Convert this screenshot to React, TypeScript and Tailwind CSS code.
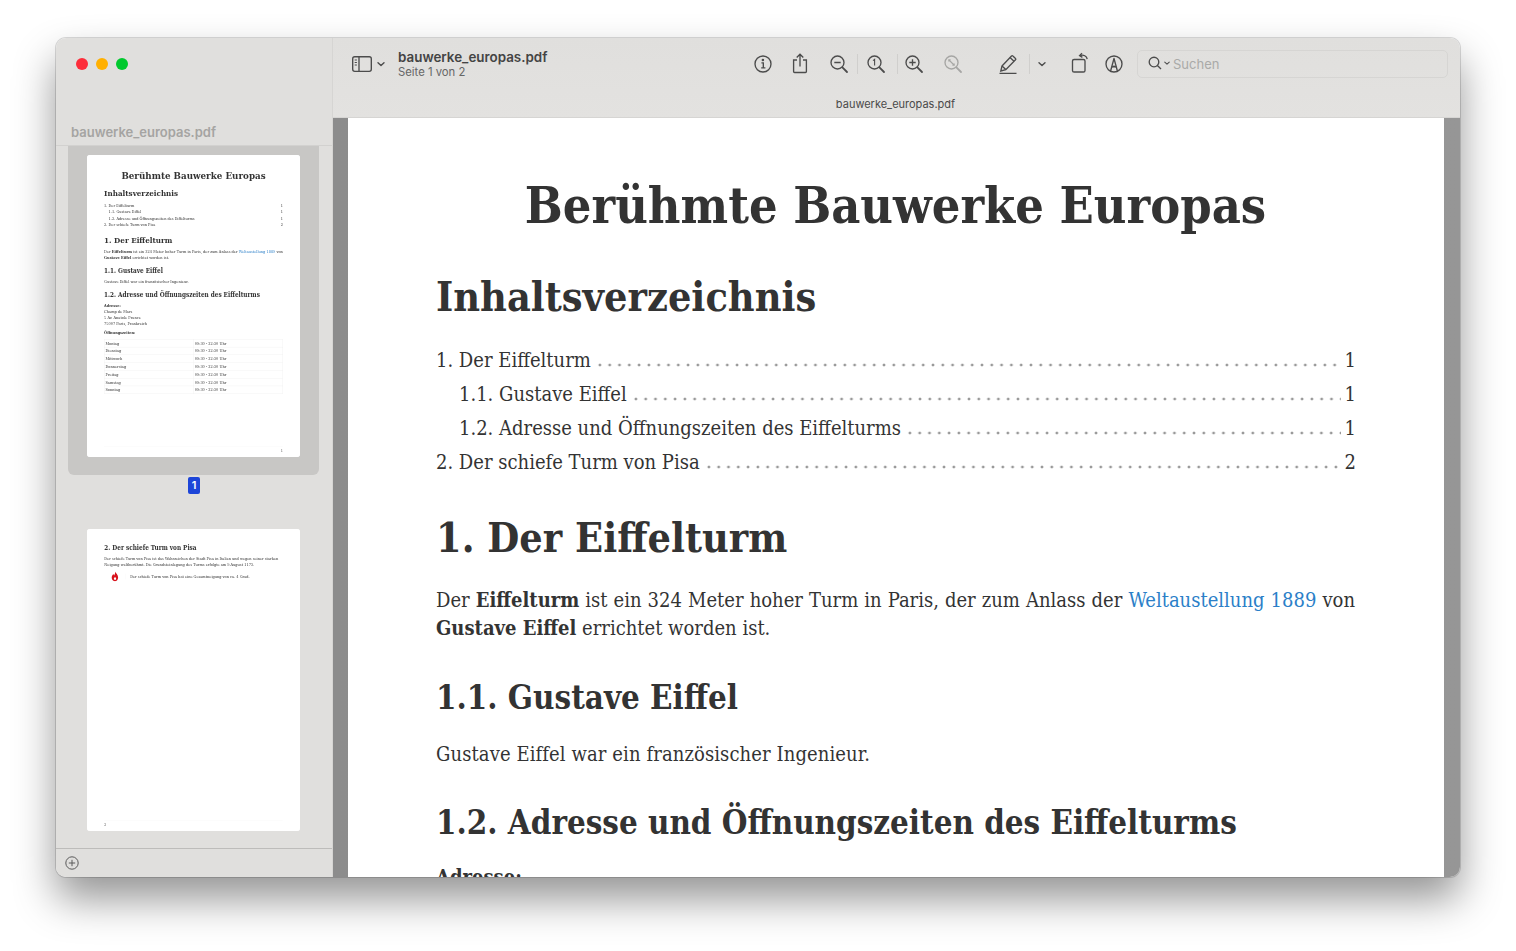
const serif = "font-['DejaVu_Serif_Condensed','DejaVu_Serif',serif]";

const days = ['Montag', 'Dienstag', 'Mittwoch', 'Donnerstag', 'Freitag', 'Samstag', 'Sonntag'];

const toc = [
  { label: '1. Der Eiffelturm', page: 1, indent: false },
  { label: '1.1. Gustave Eiffel', page: 1, indent: true },
  { label: '1.2. Adresse und Öffnungszeiten des Eiffelturms', page: 1, indent: true },
  { label: '2. Der schiefe Turm von Pisa', page: 2, indent: false },
];

const H2 = ({ children, className }: { children: React.ReactNode; className: string }) => (
  <h2 className={`text-[41px] leading-[56px] font-bold ${className}`}>{children}</h2>
);

const H3 = ({ children, className }: { children: React.ReactNode; className: string }) => (
  <h3 className={`text-[32.8px] leading-[44px] font-bold ${className}`}>{children}</h3>
);

const PageOne = () => (
  <div className={`flex h-[1554px] w-[1096px] flex-col bg-white pt-[74px] pr-[89px] pl-[88px] text-[20px] leading-[28px] text-[#333333] ${serif}`}>
    <h1 className="text-center text-[50px] leading-[60px] font-bold">Berühmte Bauwerke Europas</h1>
    <H2 className="mt-[33px]">Inhaltsverzeichnis</H2>
    <div className="mt-[18px]">
      {toc.map((row) => (
        <div key={row.label} className={`flex h-[34px] items-center ${row.indent ? 'pl-[23px]' : ''}`}>
          <span>{row.label}</span>
          <span className="mx-[4px] mt-[10px] h-[6px] flex-1 bg-[radial-gradient(circle,#999999_1.2px,transparent_1.7px)] bg-[length:9.8px_6px] bg-repeat-x" />
          <span className="-mr-[1px]">{row.page}</span>
        </div>
      ))}
    </div>
    <H2 className="mt-[31px]">1. Der Eiffelturm</H2>
    <p className="mt-[20px] text-justify">
      Der <b>Eiffelturm</b> ist ein 324 Meter hoher Turm in Paris, der zum Anlass der{' '}
      <span className="text-[#2b7fc8]">Weltaustellung 1889</span> von <b>Gustave Eiffel</b> errichtet worden ist.
    </p>
    <H3 className="mt-[34px]">1.1. Gustave Eiffel</H3>
    <p className="mt-[20px] tracking-[0.1px]">Gustave Eiffel war ein französischer Ingenieur.</p>
    <H3 className="mt-[33px]">1.2. Adresse und Öffnungszeiten des Eiffelturms</H3>
    <div className="mt-[17px] leading-[30px]">
      <b>Adresse:</b>
      <div>Champ de Mars</div>
      <div>5 Av. Anatole France</div>
      <div>75007 Paris, Frankreich</div>
    </div>
    <div className="mt-[17px] leading-[30px] font-bold">Öffnungszeiten:</div>
    <div className="mt-[20px] border-t border-l border-[#dddddd]">
      {days.map((day) => (
        <div key={day} className="grid h-[40px] grid-cols-2 items-center border-b border-[#dddddd]">
          <span className="flex h-full items-center border-r border-[#dddddd] pl-[6px]">{day}</span>
          <span className="flex h-full items-center border-r border-[#dddddd] pl-[6px]">09:30 - 22:30 Uhr</span>
        </div>
      ))}
    </div>
    <div className="mt-auto mb-[22px] border-t border-[#eeeeee] pt-[10px] text-right text-[16px] leading-[24px]">1</div>
  </div>
);

const PageTwo = () => (
  <div className={`flex h-[1554px] w-[1096px] flex-col bg-white px-[89px] pt-[76px] text-[20px] leading-[30px] text-[#333333] ${serif}`}>
    <H3 className="">2. Der schiefe Turm von Pisa</H3>
    <p className="mt-[16px]">
      Der schiefe Turm von Pisa ist das Wahrzeichen der Stadt Pisa in Italien und wegen seiner starken Neigung
      weltberühmt. Die Grundsteinlegung des Turms erfolgte am 9.August 1173.
    </p>
    <div className="mt-[22px] flex items-center">
      <span className="flex w-[110px] justify-center">
        <svg width="42" height="52" viewBox="0 0 42 52">
          <path d="M22 1c2 9 15 15 15 30 0 11-8 19-16 19S4 43 4 32c0-8 5-12 8-18 2 3 3 6 5 7 3-5 5-12 5-20z" fill="#d8121c" />
          <path d="M21 27c2 4 6 6 6 11 0 4-3 6-6 6s-6-3-6-6c0-5 5-6 6-11z" fill="#ffffff" />
        </svg>
      </span>
      <span className="border-l border-[#eeeeee] pl-[22px]">Der schiefe Turm von Pisa hat eine Gesamtneigung von ca. 4 Grad.</span>
    </div>
    <div className="mt-auto mb-[22px] border-t border-[#eeeeee] pt-[10px] text-[16px] leading-[24px]">2</div>
  </div>
);

const Thumb = ({ children }: { children: React.ReactNode }) => (
  <div className="h-[302px] w-[213px] overflow-hidden rounded-[3px] bg-white">
    <div className="blur-[0.3px]">
      <div className="origin-top-left scale-[0.1945]">{children}</div>
    </div>
  </div>
);

const icon = 'fill-none stroke-[#4c4c4c] stroke-[1.35]';

const Magnifier = ({ children, disabled }: { children?: React.ReactNode; disabled?: boolean }) => (
  <svg width="24" height="24" viewBox="0 0 24 24" className={disabled ? 'fill-none stroke-[#a6a6a4] stroke-[1.35]' : icon}>
    <circle cx="10.5" cy="10.5" r="6.5" />
    <path d="M15.4 15.4 20 20" strokeWidth="1.8" strokeLinecap="round" />
    {children}
  </svg>
);

const Divider = ({ className }: { className: string }) => <span className={`h-[20px] w-px bg-[#d0cfcd] ${className}`} />;

const Chevron = ({ className }: { className: string }) => (
  <svg width="12" height="12" viewBox="0 0 12 12" className={`fill-none stroke-[#4c4c4c] stroke-[1.4] ${className}`}>
    <path d="M3 4.8 6 7.6l3-2.8" strokeLinecap="round" strokeLinejoin="round" />
  </svg>
);

const Toolbar = () => (
  <div className="h-[80px] border-b border-[#d6d5d3] bg-linear-to-b from-[#e0dfdd] to-[#e3e2e0] font-['Inter',sans-serif]">
    <div className="flex h-[51px] items-center pl-[19px]">
      <svg width="20" height="16" viewBox="0 0 20 16" className={icon}>
        <rect x="0.7" y="0.7" width="18.6" height="14.6" rx="2" />
        <path d="M7 1v14" />
        <path d="M2.7 4h2.2M2.7 6.5h2.2M2.7 9h2.2" strokeWidth="1" />
      </svg>
      <Chevron className="ml-[3px]" />
      <div className="ml-[11px] mt-[2px] flex w-[353px] flex-col">
        <span className="text-[13.4px] leading-[15px] font-semibold text-[#444444]">bauwerke_europas.pdf</span>
        <span className="text-[11.3px] leading-[14px] text-[#666666]">Seite 1 von 2</span>
      </div>
      <svg width="24" height="24" viewBox="0 0 24 24" className={icon}>
        <circle cx="12" cy="12" r="8" />
        <path d="M10.4 10.8h1.9v5M10.2 15.9h4.2" />
        <circle cx="11.9" cy="8" r="0.6" fill="#4c4c4c" />
      </svg>
      <svg width="24" height="24" viewBox="0 0 24 24" className={`ml-[13px] ${icon}`}>
        <path d="M9 8H5.6v11.5a1 1 0 0 0 1 1h10.8a1 1 0 0 0 1-1V8H15" />
        <path d="M12 14.5V2.5M8.7 5.6 12 2.3l3.3 3.3" />
      </svg>
      <span className="ml-[15px]">
        <Magnifier>
          <path d="M7.3 10.5h6.4" />
        </Magnifier>
      </span>
      <Divider className="ml-[6px]" />
      <span className="ml-[6px]">
        <Magnifier>
          <path d="M9 8.6l1.6-1.2v6.2" strokeWidth="1.1" />
        </Magnifier>
      </span>
      <Divider className="ml-[9px]" />
      <span className="ml-[4px]">
        <Magnifier>
          <path d="M7.3 10.5h6.4M10.5 7.3v6.4" />
        </Magnifier>
      </span>
      <span className="ml-[15px]">
        <Magnifier disabled>
          <path d="M7.8 9.6V7.8h1.8M13.2 11.4v1.8h-1.8M8 8l5 5" strokeWidth="1.1" />
        </Magnifier>
      </span>
      <svg width="24" height="24" viewBox="0 0 24 24" className={`ml-[31px] ${icon}`}>
        <path d="M6 14 15.5 4a1 1 0 0 1 1.4 0l2.6 2.4a1 1 0 0 1 0 1.4L9.8 17.6l-5 1.4z" />
        <path d="M14 5.6l4 3.6M6 14l3.8 3.6" />
        <path d="M3.5 21.3h17" />
      </svg>
      <Divider className="ml-[9px]" />
      <Chevron className="ml-[6px]" />
      <svg width="24" height="24" viewBox="0 0 24 24" className={`ml-[19px] ${icon}`}>
        <rect x="5.5" y="7.5" width="12.5" height="12.5" rx="1.6" />
        <path d="M13 3.6c3.5-1.2 6.8.4 7.2 3.6" />
        <path d="M15 1.2 12.6 3.6l2.8 1.8" />
      </svg>
      <svg width="24" height="24" viewBox="0 0 24 24" className={`ml-[11px] ${icon}`}>
        <circle cx="12" cy="12" r="8" />
        <path d="M8.6 19 12 6.5 15.4 19" strokeLinejoin="round" />
        <path d="M10.3 15.5c.5-1.5 2.9-1.5 3.4 0" strokeWidth="1.8" />
      </svg>
      <div className="ml-[11px] flex h-[28px] w-[311px] items-center rounded-[5px] border border-[#d6d5d3] pl-[10px]">
        <svg width="14" height="14" viewBox="0 0 14 14" className={`-mt-[1px] ${icon}`}>
          <circle cx="6" cy="6" r="4.8" />
          <path d="M9.4 9.4 13 13" />
        </svg>
        <Chevron className="-ml-[1px] -mt-[2px] scale-75" />
        <span className="mt-[3px] text-[13px] text-[#aaaaa8]">Suchen</span>
      </div>
    </div>
    <div className="pt-[6px] pr-[2px] text-center text-[11px] leading-[18px] text-[#4a4a4a]">bauwerke_europas.pdf</div>
  </div>
);

const Sidebar = () => (
  <div className="flex w-[277px] shrink-0 flex-col border-r border-[#d6d5d3] bg-[#e0dfdd] font-['Inter',sans-serif]">
    <div className="flex h-[108px] flex-col border-b border-[#d2d1cf]">
      <div className="flex gap-[8px] pt-[20px] pl-[20px]">
        <span className="size-[12px] rounded-full bg-[#fd2d3a]" />
        <span className="size-[12px] rounded-full bg-[#ffb000]" />
        <span className="size-[12px] rounded-full bg-[#00c92e]" />
      </div>
      <span className="mt-auto pb-[5px] pl-[15px] text-[13px] leading-[16px] font-semibold text-[#a5a4a2]">bauwerke_europas.pdf</span>
    </div>
    <div className="flex-1 overflow-hidden">
      <div className="ml-[12px] flex h-[329px] w-[251px] justify-center rounded-b-[6px] bg-[#c8c7c5] pt-[9px]">
        <Thumb>
          <PageOne />
        </Thumb>
      </div>
      <div className="mt-[2px] flex justify-center">
        <span className="flex h-[17px] w-[12px] items-center justify-center rounded-[2px] bg-[#1d45d8] text-[11px] font-semibold text-white">1</span>
      </div>
      <div className="mt-[35px] ml-[31px]">
        <Thumb>
          <PageTwo />
        </Thumb>
      </div>
    </div>
    <div className="flex h-[29px] items-center border-t border-[#bdbcba] pl-[9px]">
      <svg width="14" height="14" viewBox="0 0 14 14" className="fill-none stroke-[#5a5a5a] stroke-[1]">
        <circle cx="7" cy="7" r="6.2" />
        <path d="M7 3.8v6.4M3.8 7h6.4" />
      </svg>
    </div>
  </div>
);

export default function App() {
  return (
    <div className="min-h-[951px] bg-white pt-[38px] pl-[56px]">
      <div className="flex h-[839px] w-[1404px] overflow-hidden rounded-[10px] shadow-[0_0_0_1px_rgba(0,0,0,0.14),0_22px_42px_rgba(0,0,0,0.42)]">
        <Sidebar />
        <div className="flex min-w-0 flex-1 flex-col">
          <Toolbar />
          <div className="flex-1 overflow-hidden bg-linear-to-r from-[#8c8c8c] to-[#969696] pr-[16px] pl-[15px]">
            <div className="-mt-[16px]">
              <PageOne />
            </div>
          </div>
        </div>
      </div>
    </div>
  );
}
